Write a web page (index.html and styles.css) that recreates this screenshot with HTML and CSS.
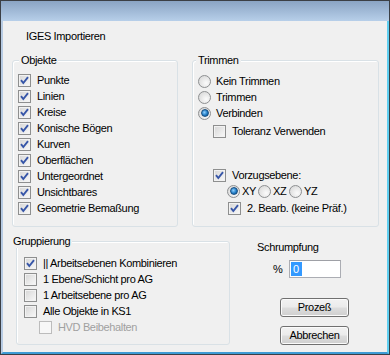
FILE: index.html
```html
<!DOCTYPE html>
<html lang="de">
<head>
    <meta charset="UTF-8">
    <title>IGES Importieren</title>
    <link rel="stylesheet" href="styles.css">
</head>
<body>
    <div class="window">
        <div class="titlebar"></div>
        <div class="client">
            <div class="caption">IGES Importieren</div>

            <div class="top">
                <fieldset class="group objekte">
                    <legend>Objekte</legend>
                    <div class="row"><span class="check on"><svg viewBox="0 0 11 11"><path d="M2 5.2 L4.3 8 L9 2.2"/></svg></span>Punkte</div>
                    <div class="row"><span class="check on"><svg viewBox="0 0 11 11"><path d="M2 5.2 L4.3 8 L9 2.2"/></svg></span>Linien</div>
                    <div class="row"><span class="check on"><svg viewBox="0 0 11 11"><path d="M2 5.2 L4.3 8 L9 2.2"/></svg></span>Kreise</div>
                    <div class="row"><span class="check on"><svg viewBox="0 0 11 11"><path d="M2 5.2 L4.3 8 L9 2.2"/></svg></span>Konische Bögen</div>
                    <div class="row"><span class="check on"><svg viewBox="0 0 11 11"><path d="M2 5.2 L4.3 8 L9 2.2"/></svg></span>Kurven</div>
                    <div class="row"><span class="check on"><svg viewBox="0 0 11 11"><path d="M2 5.2 L4.3 8 L9 2.2"/></svg></span>Oberflächen</div>
                    <div class="row"><span class="check on"><svg viewBox="0 0 11 11"><path d="M2 5.2 L4.3 8 L9 2.2"/></svg></span>Untergeordnet</div>
                    <div class="row"><span class="check on"><svg viewBox="0 0 11 11"><path d="M2 5.2 L4.3 8 L9 2.2"/></svg></span>Unsichtbares</div>
                    <div class="row"><span class="check on"><svg viewBox="0 0 11 11"><path d="M2 5.2 L4.3 8 L9 2.2"/></svg></span>Geometrie Bemaßung</div>
                </fieldset>

                <fieldset class="group trimmen">
                    <legend>Trimmen</legend>
                    <div class="row"><span class="radio"></span>Kein Trimmen</div>
                    <div class="row"><span class="radio"></span>Trimmen</div>
                    <div class="row"><span class="radio on"></span>Verbinden</div>
                    <div class="row sub tol"><span class="check"></span>Toleranz Verwenden</div>
                    <div class="row sub pref"><span class="check on"><svg viewBox="0 0 11 11"><path d="M2 5.2 L4.3 8 L9 2.2"/></svg></span>Vorzugsebene:</div>
                    <div class="row planes">
                        <span class="plane"><span class="radio on"></span>XY</span>
                        <span class="plane"><span class="radio"></span>XZ</span>
                        <span class="plane"><span class="radio"></span>YZ</span>
                    </div>
                    <div class="row second"><span class="check on"><svg viewBox="0 0 11 11"><path d="M2 5.2 L4.3 8 L9 2.2"/></svg></span>2. Bearb. (keine Präf.)</div>
                </fieldset>
            </div>

            <div class="bottom">
                <fieldset class="group gruppe">
                    <legend>Gruppierung</legend>
                    <div class="row"><span class="check on"><svg viewBox="0 0 11 11"><path d="M2 5.2 L4.3 8 L9 2.2"/></svg></span>|| Arbeitsebenen Kombinieren</div>
                    <div class="row"><span class="check"></span>1 Ebene/Schicht pro AG</div>
                    <div class="row"><span class="check"></span>1 Arbeitsebene pro AG</div>
                    <div class="row"><span class="check"></span>Alle Objekte in KS1</div>
                    <div class="row disabled"><span class="check"></span>HVD Beibehalten</div>
                </fieldset>

                <div class="side">
                    <div class="shrink-label">Schrumpfung</div>
                    <div class="shrink-row">
                        <span class="percent">%</span>
                        <div class="field"><span class="selected">0</span></div>
                    </div>
                    <div class="btn process">Prozeß</div>
                    <div class="btn cancel">Abbrechen</div>
                </div>
            </div>
        </div>
    </div>
</body>
</html>
```

FILE: styles.css
```css
body {
    margin: 0;
    font-family: "Liberation Sans", Arial, sans-serif;
    font-size: 11px;
    line-height: 13px;
    letter-spacing: -0.35px;
    color: #000;
    background: #f0f0f0;
}

.window {
    width: 390px;
    height: 355px;
    box-sizing: border-box;
    border: 1px solid #3b3f45;
    display: flex;
    flex-direction: column;
}

.titlebar {
    height: 20px;
    flex: none;
    background: linear-gradient(#8aa4c4, #b7cfe9);
}

.client {
    flex: 1;
    background: #f0f0f0;
    border-left: 2px solid #b7cbe3;
    border-right: 2px solid #5fcff1;
    border-bottom: 2px solid #3e9bd5;
}

.caption {
    margin: 9px 0 0 23px;
}

/* group boxes */
.group {
    margin: 0;
    padding: 0;
    min-width: 0;
    box-sizing: border-box;
    border: 1px solid #d9e1e6;
    border-radius: 3px;
    box-shadow: inset 1px 1px 0 #fff;
}

.group legend {
    padding: 0 2px;
    background: #f0f0f0;
}

.top {
    display: flex;
    margin-top: 11px;
}

.objekte {
    margin-left: 9px;
    width: 166px;
    height: 173px;
    padding-top: 5px;
}

.objekte legend {
    margin-left: 6px;
}

.objekte .row {
    margin-left: 5px;
}

.trimmen {
    margin-left: 14px;
    width: 187px;
    height: 173px;
    padding-top: 6px;
}

.trimmen legend {
    margin-left: 3px;
}

.trimmen .row {
    margin-left: 5px;
}

.trimmen .sub {
    margin-left: 20px;
}

.trimmen .tol {
    margin-top: 2px;
}

.trimmen .pref {
    margin-top: 28px;
}

.trimmen .planes {
    margin-left: 34px;
}

.trimmen .second {
    margin-left: 35px;
    margin-top: 1px;
}

.bottom {
    display: flex;
    margin-top: 8px;
}

.gruppe {
    margin-left: 13px;
    width: 214px;
    height: 110px;
    padding-top: 7px;
}

.gruppe legend {
    margin-left: -6px;
}

.gruppe .row {
    margin-left: 7px;
}

.gruppe .disabled {
    margin-left: 22px;
    color: #a0a0a0;
}

/* rows and controls */
.row {
    display: flex;
    align-items: center;
    height: 16px;
    white-space: nowrap;
}

.check {
    width: 13px;
    height: 13px;
    box-sizing: border-box;
    flex: none;
    margin-right: 6px;
    border: 1px solid #8e8f8f;
    background: linear-gradient(135deg, #d6d6d6, #f9f9f9);
    box-shadow: inset 0 0 0 1px #f2f2f2;
    display: flex;
    align-items: center;
    justify-content: center;
}

.check svg {
    width: 11px;
    height: 11px;
}

.check path {
    fill: none;
    stroke: #3756a8;
    stroke-width: 1.9;
}

.disabled .check {
    border-color: #bcbcbc;
    background: #f7f7f7;
    box-shadow: none;
}

.radio {
    width: 13px;
    height: 13px;
    box-sizing: border-box;
    flex: none;
    margin-right: 5px;
    border: 1px solid #8d8f91;
    border-radius: 50%;
    background: radial-gradient(circle at 65% 65%, #fbfbfb, #d3d3d3);
    display: flex;
    align-items: center;
    justify-content: center;
}

.radio.on::after {
    content: "";
    width: 6px;
    height: 6px;
    border-radius: 50%;
    border: 1px solid #1b4f80;
    background: radial-gradient(circle at 40% 40%, #8fd0ff, #1f7bc4 55%, #0d4e8c);
}

.planes .plane {
    display: flex;
    align-items: center;
    width: 31px;
}

.planes .radio {
    margin-right: 2px;
}

/* right side */
.side {
    margin-left: 27px;
    padding-top: 6px;
}

.shrink-label {
    height: 13px;
}

.shrink-row {
    display: flex;
    align-items: center;
    margin-top: 6px;
}

.percent {
    margin-left: 16px;
    width: 16px;
}

.field {
    width: 52px;
    height: 18px;
    box-sizing: border-box;
    border: 1px solid #abadb3;
    border-top-color: #9ea0a6;
    background: #fff;
    padding: 1px;
}

.selected {
    display: inline-block;
    height: 14px;
    line-height: 14px;
    padding: 0 3px 0 2px;
    background: #3399ff;
    color: #fff;
}

.btn {
    width: 69px;
    height: 19px;
    box-sizing: border-box;
    margin-left: 23px;
    border: 1px solid #707070;
    border-radius: 3px;
    background: linear-gradient(#f2f2f2 0%, #ebebeb 48%, #dddddd 52%, #cfcfcf 100%);
    box-shadow: inset 0 0 0 1px #fbfbfb;
    text-align: center;
    line-height: 17px;
}

.process {
    margin-top: 20px;
}

.cancel {
    margin-top: 9px;
}
```
